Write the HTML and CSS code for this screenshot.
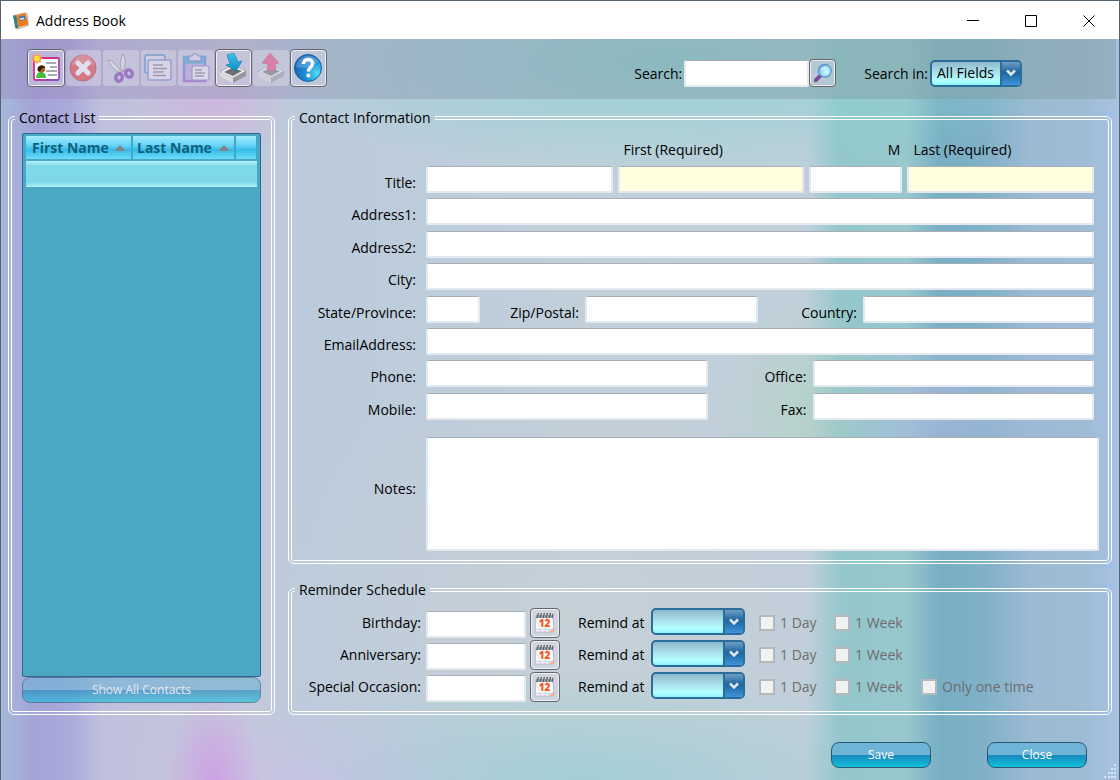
FILE: index.html
```html
<!DOCTYPE html>
<html lang="en">
<head>
    <meta charset="UTF-8">
    <meta name="viewport" content="width=device-width, initial-scale=1.0">
    <title>Address Book</title>
    <link rel="stylesheet" href="styles.css">
</head>
<body>
    <div class="window">
        <header class="title-bar">
            <svg class="app-icon" viewBox="0 0 20 20" aria-hidden="true">
                <path d="M2 4 14 1l3 1 1 13-12 4-2-1z" fill="#e9e4d8" stroke="#8a6a48" stroke-width="0.600"/>
                <path d="M5 4 15 1l3 13-11 3z" fill="#ee7a1c"/>
                <path d="M1 4l4 0 2 14-3 0z" fill="#34808e"/>
                <path d="M8 5l6-1 1 4-6 2z" fill="#3a78b8"/>
                <path d="M9 7l4-1 1 2-5 1z" fill="#cfe4f4"/>
            </svg>
            <h1>Address Book</h1>
            <div class="window-controls">
                <button type="button" aria-label="Minimize"><svg viewBox="0 0 12 12"><path d="M0 5.500h12"/></svg></button>
                <button type="button" aria-label="Maximize"><svg viewBox="0 0 12 12"><path d="M0.500 0.500h11v11h-11z"/></svg></button>
                <button type="button" aria-label="Close window"><svg viewBox="0 0 12 12"><path d="M0.500 0.500l11 11M11.500 0.500l-11 11"/></svg></button>
            </div>
        </header>

        <div class="content">
            <!-- Toolbar -->
            <div class="toolbar">
                <div class="tools">
                    <button type="button" class="tool" aria-label="New contact">
                        <svg viewBox="0 0 30 30">
                            <defs>
                                <linearGradient id="cardFrame" x1="0" y1="0" x2="1" y2="1">
                                    <stop offset="0" stop-color="#f0206a"/>
                                    <stop offset="1" stop-color="#8a52c4"/>
                                </linearGradient>
                            </defs>
                            <rect x="3" y="5" width="25" height="22" rx="1.500" fill="#fff" stroke="url(#cardFrame)" stroke-width="1.800"/>
                            <path d="M15 10h10M19 14h7M15 18h11M17 22h9" stroke="#8c8e96" stroke-width="1.600"/>
                            <path d="M5 25c0-5 3-6 5-6s5 1 5 6z" fill="#3fbf3c"/>
                            <circle cx="10.500" cy="16" r="3.600" fill="#a8641c"/>
                            <path d="M6.500 16c0-4 7-5 8-1-3-1-4 0-5 3-2 1-3 0-3-2z" fill="#2c1a0c"/>
                            <path d="M6 0l1.500 2.500L10 1.500 9.500 4l2.500 1.500L9.500 7l.5 2.500-2.500-.5L6 11 4.500 9 2 9.500 2.500 7 0 5.500 2.500 4 2 1.500l2.500 1z" fill="#ff8a50"/>
                            <circle cx="6" cy="5.500" r="3" fill="#ffe23c"/>
                        </svg>
                    </button>
                    <button type="button" class="tool" aria-label="Delete" disabled>
                        <svg viewBox="0 0 30 30">
                            <circle cx="15" cy="15" r="13" fill="#e8362e" stroke="#b82a28"/>
                            <path d="M4 13a11 11 0 0 1 22 0c-7-4-15-4-22 0z" fill="#f58a80" opacity="0.600"/>
                            <path d="M10 10l10 10M20 10l-10 10" stroke="#fff" stroke-width="5.200" stroke-linecap="round"/>
                        </svg>
                    </button>
                    <button type="button" class="tool" aria-label="Cut" disabled>
                        <svg viewBox="0 0 30 30">
                            <path d="M2 7c4 0 9 5 14 13-6-2-12-6-14-13zM17 1c3 4 3 10 0 18-4-6-3-13 0-18z" fill="#e6e6ee" stroke="#77777f" stroke-width="0.900"/>
                            <ellipse cx="13" cy="24.500" rx="3.200" ry="3.800" fill="none" stroke="#7530a8" stroke-width="3.400" transform="rotate(20 13 24.500)"/>
                            <ellipse cx="23" cy="20.500" rx="3.200" ry="3.800" fill="none" stroke="#7530a8" stroke-width="3.400" transform="rotate(-30 23 20.500)"/>
                        </svg>
                    </button>
                    <button type="button" class="tool" aria-label="Copy" disabled>
                        <svg viewBox="0 0 30 30">
                            <rect x="2" y="2" width="20" height="18" rx="2" fill="#f0f0fa" fill-opacity="0.400" stroke="#2c7cc4" stroke-width="1.500"/>
                            <rect x="5" y="7" width="23" height="20" rx="2" fill="#ece6f6" stroke="#6480c8" stroke-width="1.500"/>
                            <path d="M10 12h10M10 15.500h14M10 19h11M10 22.500h13" stroke="#74747e" stroke-width="1.300"/>
                        </svg>
                    </button>
                    <button type="button" class="tool" aria-label="Paste" disabled>
                        <svg viewBox="0 0 30 30">
                            <defs>
                                <linearGradient id="clipBlue" x1="0" y1="0" x2="0" y2="1">
                                    <stop offset="0" stop-color="#2f8ed0"/>
                                    <stop offset="1" stop-color="#8a4fc0"/>
                                </linearGradient>
                            </defs>
                            <path d="M3 4h21v24H3z" fill="#b49edc" stroke="url(#clipBlue)" stroke-width="2.400"/>
                            <path d="M4 5h19v6H4z" fill="#4c9ad8"/>
                            <path d="M8 8V3h3l1-2h4l1 2h3v5z" fill="#cfd8f0" stroke="#4868a8"/>
                            <rect x="11" y="13" width="17" height="14" rx="1.500" fill="#f0ecfa" stroke="#6a78c4" stroke-width="1.200"/>
                            <path d="M14 17h7M14 20h10M14 23h9" stroke="#74747e" stroke-width="1.300"/>
                        </svg>
                    </button>
                    <button type="button" class="tool" aria-label="Import">
                        <svg viewBox="0 0 30 30">
                            <defs>
                                <linearGradient id="blueArrow" x1="0" y1="0" x2="0" y2="1">
                                    <stop offset="0" stop-color="#3cc4ec"/>
                                    <stop offset="1" stop-color="#0d8fc4"/>
                                </linearGradient>
                                <symbol id="tray" viewBox="0 0 30 30">
                                    <path d="M2 19 14 12l14 6-13 7z" fill="#f4f4f5" stroke="#8c8c90" stroke-width="0.600"/>
                                    <path d="M6 19 14 15l10 3-9 5z" fill="#6f6f73"/>
                                    <path d="M2 19l13 6v5L2 23.500z" fill="#dcdcde"/>
                                    <path d="M28 18l-13 7v5l13-7z" fill="#97979b"/>
                                </symbol>
                            </defs>
                            <use href="#tray"/>
                            <path d="M9 2l7-2 4 9 4-1-6 10-10-6 4-1z" fill="url(#blueArrow)" stroke="#0d7cab" stroke-width="0.600"/>
                        </svg>
                    </button>
                    <button type="button" class="tool" aria-label="Export" disabled>
                        <svg viewBox="0 0 30 30">
                            <use href="#tray"/>
                            <path d="M14 0l9 10-4 1 1 5c-3 3-7 2-9 0l1-5-6-1z" fill="#ee3c7c" stroke="#c42a64" stroke-width="0.600"/>
                        </svg>
                    </button>
                    <button type="button" class="tool" aria-label="Help">
                        <svg viewBox="0 0 30 30">
                            <defs>
                                <radialGradient id="helpBall" cx="0.85" cy="0.7" r="0.9">
                                    <stop offset="0" stop-color="#52dcf4"/>
                                    <stop offset="0.5" stop-color="#1f8ed6"/>
                                    <stop offset="1" stop-color="#1560ae"/>
                                </radialGradient>
                            </defs>
                            <circle cx="15" cy="15" r="13.500" fill="url(#helpBall)" stroke="#1462a8"/>
                            <path d="M3 14a12 12 0 0 1 22-6c-4 6-14 8-22 6z" fill="#fff" opacity="0.220"/>
                            <path d="M10.500 11c0-6 9-6 9-.5 0 4-4 3.500-4 8" fill="none" stroke="#fff" stroke-width="3.400"/>
                            <circle cx="15.300" cy="22.500" r="2" fill="#fff"/>
                        </svg>
                    </button>
                </div>
                <form class="search">
                    <label for="search">Search:</label>
                    <input type="text" id="search">
                    <button type="button" class="icon-button search-button" aria-label="Search">
                        <svg viewBox="0 0 24 24">
                            <defs>
                                <radialGradient id="lens" cx="0.6" cy="0.6" r="0.6">
                                    <stop offset="0" stop-color="#e4fbff"/>
                                    <stop offset="0.7" stop-color="#8ad8f8"/>
                                    <stop offset="1" stop-color="#5cb0ec"/>
                                </radialGradient>
                            </defs>
                            <path d="M10 14l-6 6" stroke="#7a4a9c" stroke-width="4" stroke-linecap="round"/>
                            <circle cx="14" cy="9.500" r="7" fill="url(#lens)" stroke="#5f93cc" stroke-width="1.400"/>
                            <path d="M9.500 9c1-4 6-5 8-2-3 0-5 1-8 2z" fill="#fff" opacity="0.600"/>
                        </svg>
                    </button>
                    <label for="searchIn" class="search-in">Search in:</label>
                    <span class="combo">
                        <select id="searchIn">
                            <option>All Fields</option>
                        </select>
                        <span class="combo-arrow">
                            <svg viewBox="0 0 10 8">
                                <defs>
                                    <path id="chevron" d="M1 1.500 5 5.500 9 1.500" fill="none" stroke="#dfe6ea" stroke-width="2.600"/>
                                </defs>
                                <use href="#chevron"/>
                            </svg>
                        </span>
                    </span>
                </form>
            </div>

            <div class="panels">
                <!-- Contact list -->
                <fieldset class="contact-list">
                    <legend>Contact List</legend>
                    <div class="list-body">
                        <div class="list-box">
                            <table>
                                <thead>
                                    <tr>
                                        <th scope="col" class="first-col">First Name <span class="sort"></span></th>
                                        <th scope="col" class="last-col">Last Name <span class="sort"></span></th>
                                        <td></td>
                                    </tr>
                                </thead>
                                <tbody>
                                    <tr>
                                        <td colspan="3"></td>
                                    </tr>
                                </tbody>
                            </table>
                        </div>
                        <button type="button" class="action" disabled>Show All Contacts</button>
                    </div>
                </fieldset>

                <div class="details">
                    <!-- Contact information -->
                    <fieldset class="contact-info">
                        <legend>Contact Information</legend>
                        <div class="info-body">
                            <div class="name-cols name-heads">
                                <span></span>
                                <label for="first">First (Required)</label>
                                <label for="middle" class="middle">M</label>
                                <label for="last">Last (Required)</label>
                            </div>
                            <div class="rows">
                                <div class="row">
                                    <label for="title">Title:</label>
                                    <div class="name-cols">
                                        <input type="text" id="title">
                                        <input type="text" id="first" class="required">
                                        <input type="text" id="middle">
                                        <input type="text" id="last" class="required">
                                    </div>
                                </div>
                                <div class="row">
                                    <label for="address1">Address1:</label>
                                    <input type="text" id="address1">
                                </div>
                                <div class="row">
                                    <label for="address2">Address2:</label>
                                    <input type="text" id="address2">
                                </div>
                                <div class="row">
                                    <label for="city">City:</label>
                                    <input type="text" id="city">
                                </div>
                                <div class="row">
                                    <label for="state">State/Province:</label>
                                    <div class="state-cols">
                                        <input type="text" id="state">
                                        <label for="zip">Zip/Postal:</label>
                                        <input type="text" id="zip">
                                        <label for="country">Country:</label>
                                        <input type="text" id="country">
                                    </div>
                                </div>
                                <div class="row">
                                    <label for="email">EmailAddress:</label>
                                    <input type="text" id="email">
                                </div>
                                <div class="row">
                                    <label for="phone">Phone:</label>
                                    <div class="phone-cols">
                                        <input type="text" id="phone">
                                        <label for="office">Office:</label>
                                        <input type="text" id="office">
                                    </div>
                                </div>
                                <div class="row">
                                    <label for="mobile">Mobile:</label>
                                    <div class="phone-cols">
                                        <input type="text" id="mobile">
                                        <label for="fax">Fax:</label>
                                        <input type="text" id="fax">
                                    </div>
                                </div>
                            </div>
                            <div class="row notes-row">
                                <label for="notes">Notes:</label>
                                <textarea id="notes"></textarea>
                            </div>
                        </div>
                    </fieldset>

                    <!-- Reminder schedule -->
                    <fieldset class="reminders">
                        <legend>Reminder Schedule</legend>
                        <div class="reminder-body">
                            <div class="reminder">
                                <label for="birthday" class="date-label">Birthday:</label>
                                <input type="text" id="birthday">
                                <button type="button" class="icon-button" aria-label="Pick birthday">
                                    <svg viewBox="0 0 22 22">
                                        <defs>
                                            <g id="calendar">
                                                <path d="M2 4h17l1 14-1 2H1z" fill="#f8f8fc" stroke="#a9abc8" stroke-width="0.800"/>
                                                <path d="M2 3h17v3H2z" fill="#a3a5ad"/>
                                                <path d="M3 6 4.500 1M6 6l1.500-5M9 6l1.500-5M12 6l1.500-5M15 6l1.500-5M18 6l1-4" stroke="#5c5e66" stroke-width="1.200"/>
                                                <path d="M2 17.500h17M6 16v4M11 16v4M15 16v4" stroke="#c9cbe6" stroke-width="0.800"/>
                                                <path d="M19.500 15.500v4.500h-4z" fill="#f3b27c"/>
                                            </g>
                                        </defs>
                                        <use href="#calendar"/>
                                        <text x="10.500" y="15" text-anchor="middle" class="calendar-day">12</text>
                                    </svg>
                                </button>
                                <label for="birthdayAt" class="remind-label">Remind at</label>
                                <span class="combo">
                                    <select id="birthdayAt"><option></option></select>
                                    <span class="combo-arrow"><svg viewBox="0 0 10 8"><use href="#chevron"/></svg></span>
                                </span>
                                <label class="check day"><input type="checkbox" disabled>1 Day</label>
                                <label class="check week"><input type="checkbox" disabled>1 Week</label>
                            </div>
                            <div class="reminder">
                                <label for="anniversary" class="date-label">Anniversary:</label>
                                <input type="text" id="anniversary">
                                <button type="button" class="icon-button" aria-label="Pick anniversary">
                                    <svg viewBox="0 0 22 22">
                                        <use href="#calendar"/>
                                        <text x="10.500" y="15" text-anchor="middle" class="calendar-day">12</text>
                                    </svg>
                                </button>
                                <label for="anniversaryAt" class="remind-label">Remind at</label>
                                <span class="combo">
                                    <select id="anniversaryAt"><option></option></select>
                                    <span class="combo-arrow"><svg viewBox="0 0 10 8"><use href="#chevron"/></svg></span>
                                </span>
                                <label class="check day"><input type="checkbox" disabled>1 Day</label>
                                <label class="check week"><input type="checkbox" disabled>1 Week</label>
                            </div>
                            <div class="reminder">
                                <label for="occasion" class="date-label">Special Occasion:</label>
                                <input type="text" id="occasion">
                                <button type="button" class="icon-button" aria-label="Pick special occasion">
                                    <svg viewBox="0 0 22 22">
                                        <use href="#calendar"/>
                                        <text x="10.500" y="15" text-anchor="middle" class="calendar-day">12</text>
                                    </svg>
                                </button>
                                <label for="occasionAt" class="remind-label">Remind at</label>
                                <span class="combo">
                                    <select id="occasionAt"><option></option></select>
                                    <span class="combo-arrow"><svg viewBox="0 0 10 8"><use href="#chevron"/></svg></span>
                                </span>
                                <label class="check day"><input type="checkbox" disabled>1 Day</label>
                                <label class="check week"><input type="checkbox" disabled>1 Week</label>
                                <label class="check"><input type="checkbox" disabled>Only one time</label>
                            </div>
                        </div>
                    </fieldset>
                </div>
            </div>

            <div class="actions">
                <button type="button" class="action">Save</button>
                <button type="button" class="action">Close</button>
            </div>
            <svg class="grip" viewBox="0 0 14 14" aria-hidden="true">
                <path d="M12 0h2v2h-2zM9 4h2v2H9zM12 4h2v2h-2zM6 8h2v2H6zM9 8h2v2H9zM12 8h2v2h-2zM2 12h2v2H2zM6 12h2v2H6zM9 12h2v2H9zM12 12h2v2h-2z"/>
            </svg>
        </div>
    </div>
</body>
</html>
```

FILE: styles.css
```css
/* Global styles */
* {
    margin: 0;
    padding: 0;
    box-sizing: border-box;
}

body {
    background: #a9b8c4;
    color: #000;
    font-family: "Open Sans", "Noto Sans", sans-serif;
    font-size: 14px;
    line-height: 20px;
}

input, button, select, textarea {
    font: inherit;
    color: inherit;
}

.window {
    display: flex;
    flex-direction: column;
    min-height: 100vh;
    padding-top: 1px;
    border: 1px solid #56646f;
    border-bottom: none;
    background: #fff;
}

/* Title bar */
.title-bar {
    display: flex;
    align-items: center;
    height: 37px;
    padding: 0 1px 0 11px;
    background: #fff;
}

.app-icon {
    width: 18px;
    height: 20px;
    margin-right: 6px;
}

h1 {
    font-size: 14px;
    font-weight: 400;
}

.window-controls {
    display: flex;
    margin-left: auto;
}

.window-controls button {
    display: flex;
    align-items: center;
    justify-content: center;
    width: 58px;
    height: 37px;
    border: none;
    background: none;
}

.window-controls svg {
    width: 12px;
    height: 12px;
    fill: none;
    stroke: #000;
}

/* Watercolour backdrop */
.content {
    position: relative;
    flex: 1;
    display: flex;
    flex-direction: column;
    background:
        radial-gradient(ellipse 48px 90px at 19% 100%, rgba(206, 150, 230, 0.75), transparent),
        radial-gradient(ellipse 80px 60px at 19% 9%, rgba(214, 165, 226, 0.5), transparent),
        radial-gradient(ellipse 320px 110px at 52% 100%, rgba(150, 206, 212, 0.7), transparent),
        radial-gradient(ellipse 420px 120px at 60% 3%, rgba(140, 210, 210, 0.9), transparent),
        radial-gradient(ellipse 90px 120px at 72% 50%, rgba(170, 212, 186, 0.5), transparent),
        radial-gradient(ellipse 130px 90px at 84% 50%, rgba(170, 184, 222, 0.8), transparent),
        radial-gradient(ellipse 200px 80px at 28% 100%, rgba(206, 192, 230, 0.7), transparent),
        radial-gradient(ellipse 300px 260px at 50% 78%, rgba(198, 208, 214, 0.8), transparent),
        linear-gradient(to right,
            #a5b8da 0%, #a5a4d8 3%, #a9a9da 6%, #bfc0dd 9%, #c5c8da 20%, #bccbdc 27%,
            #becddb 40%, #c2d0da 54%, #c1cfdb 72%, #93c7cc 75%, #97c8cd 81%,
            #78aec4 84%, #80b1c8 88%, #9bbad3 92%, #9fbcd6 97%, #a8c2e4 100%);
}

/* Toolbar */
.toolbar {
    display: flex;
    justify-content: space-between;
    align-items: center;
    height: 60px;
    margin-right: 3px;
    padding: 0 94px 0 26px;
    background: linear-gradient(to right, rgba(150, 128, 185, 0.35), rgba(130, 148, 168, 0.4) 50%, rgba(130, 155, 155, 0.45));
}

.tools {
    display: grid;
    grid-template-columns: repeat(8, 1fr);
    width: 300px;
    padding-bottom: 2px;
}

.tool, .icon-button {
    display: flex;
    align-items: center;
    justify-content: center;
    border: 1px solid #66666c;
    border-radius: 4px;
    background: rgba(225, 222, 236, 0.45);
    box-shadow: inset 0 0 0 1px #eeeef2;
}

.tool {
    height: 38px;
}

.tool svg {
    width: 30px;
    height: 30px;
}

.tool:disabled {
    border-color: transparent;
    background-clip: padding-box;
    box-shadow: none;
}

.tool:disabled svg {
    opacity: 0.5;
}

.icon-button {
    width: 30px;
    height: 30px;
}

.icon-button svg {
    width: 22px;
    height: 22px;
}

/* Fields */
input[type="text"], textarea {
    display: block;
    width: 100%;
    min-width: 0;
    height: 27px;
    padding: 0 4px;
    border: 2px solid #e3e9ee;
    border-top: 1px solid #a9adb5;
    border-radius: 2px;
    background: #fff;
}

input[type="text"].required {
    background: #ffffe0;
}

.search {
    display: flex;
    align-items: center;
    padding-top: 8px;
    white-space: nowrap;
}

.search input[type="text"] {
    width: 125px;
    margin-left: 2px;
}

.icon-button.search-button {
    width: 27px;
    height: 28px;
}

.search-in {
    margin: 0 2px 0 28px;
}

.search label {
    padding-top: 2px;
}

.combo {
    position: relative;
    display: flex;
    width: 92px;
    height: 27px;
    border: 2px solid #2a6c9a;
    border-radius: 5px;
    background: #2a6c9a;
}

.combo select {
    width: 100%;
    padding: 0 20px 0 5px;
    border: none;
    border-radius: 3px;
    appearance: none;
    background: linear-gradient(#8fb9cc, #a9e0ea 45%, #b4ffff 80%, #8ef4fa);
}

.combo-arrow {
    position: absolute;
    top: 0;
    right: 0;
    display: flex;
    align-items: center;
    justify-content: center;
    width: 20px;
    height: 100%;
    border-left: 2px solid #2a6c9a;
    border-radius: 0 3px 3px 0;
    background: linear-gradient(#6c9fc4, #1f669e 45%, #3c94da);
    pointer-events: none;
}

.combo-arrow svg {
    width: 10px;
    height: 8px;
}

/* Panels */
.panels {
    flex: 1;
    display: flex;
    gap: 13px;
    padding: 9px 7px 0 7px;
}

fieldset {
    display: flex;
    flex-direction: column;
    min-width: 0;
    padding: 0 4px 0 3px;
    border: 4px double #fff;
    border-radius: 6px;
}

legend {
    padding: 0 4px;
}

.contact-list {
    width: 267px;
}

.list-body {
    flex: 1;
    display: flex;
    flex-direction: column;
    padding: 5px 6px 8px 7px;
}

.list-box {
    flex: 1;
    padding: 2px 2px 0 3px;
    border: 1px solid #2a6898;
    border-radius: 2px;
    background: #4ca8c2;
}

table {
    width: 100%;
    border-collapse: collapse;
    table-layout: fixed;
}

thead th, thead td {
    height: 24px;
    border-right: 2px solid #3fa6cc;
    background: linear-gradient(#a4ecfc, #66d4f6 40%, #36bce8 60%, #6cdcfa);
    color: #10607c;
    text-align: left;
}

thead th {
    padding-left: 6px;
    white-space: nowrap;
}

.first-col {
    width: 106px;
}

.last-col {
    width: 103px;
}

thead .last-col {
    padding-left: 4px;
}

.sort {
    display: inline-block;
    margin-left: 2px;
    border: 6px solid transparent;
    border-top: none;
    border-bottom-color: #808488;
    vertical-align: 2px;
}

tbody td {
    height: 27px;
    border-top: 2px solid #4ca8c2;
    background: linear-gradient(#b4f2fa, #7ed8ea 20%, #7ed8ea 80%, #b0f0f8);
}

.details {
    flex: 1;
    display: flex;
    flex-direction: column;
    gap: 16px;
    min-width: 0;
}

.contact-info, .info-body, .rows {
    flex: 1;
}

.info-body {
    display: flex;
    flex-direction: column;
    padding: 12px 5px 9px 1px;
}

.name-cols {
    display: grid;
    grid-template-columns: 2fr 2fr 1fr 2fr;
    gap: 5px;
}

.name-heads {
    margin: 0 5px 6px 130px;
}

.name-heads label {
    padding-left: 6px;
}

.name-heads .middle {
    padding-right: 2px;
    text-align: right;
}

.rows {
    display: grid;
    grid-auto-rows: 1fr;
    padding-right: 5px;
}

.row {
    display: grid;
    grid-template-columns: 120px 1fr;
    gap: 10px;
}

.row label {
    padding-top: 7px;
    text-align: right;
    white-space: nowrap;
}

.state-cols, .phone-cols {
    display: grid;
}

.state-cols {
    grid-template-columns: 54fr 105px 173fr 105px 231fr;
}

.phone-cols {
    grid-template-columns: 1fr 105px 1fr;
}

.state-cols label, .phone-cols label {
    padding-right: 6px;
}

.notes-row {
    align-items: center;
    padding-top: 12px;
}

.row label[for="notes"] {
    padding: 0 0 10px;
}

textarea {
    height: 114px;
    resize: none;
}

/* Reminders */
.reminder-body {
    display: flex;
    flex-direction: column;
    gap: 2px;
    padding: 8px 0 9px 1px;
}

.reminder {
    display: flex;
    align-items: center;
    height: 30px;
}

.date-label {
    width: 125px;
    margin-right: 5px;
    text-align: right;
    white-space: nowrap;
}

.reminder input[type="text"] {
    align-self: flex-end;
    width: 100px;
    margin-right: 4px;
}

.calendar-day {
    font-size: 10px;
    font-weight: 800;
    fill: #f4581c;
}

.remind-label {
    width: 73px;
    margin-left: 18px;
}

.reminder .combo {
    width: 94px;
    align-self: flex-start;
}

.check {
    display: flex;
    align-items: center;
    color: #6d6d6d;
}

.check input {
    width: 16px;
    height: 16px;
    margin-right: 5px;
    border: 2px solid #b4b8bb;
    appearance: none;
    background: #f1f1f1;
}

.day {
    width: 75px;
    margin-left: 14px;
}

.week {
    width: 87px;
}

/* Bottom buttons */
.actions {
    display: flex;
    justify-content: flex-end;
    gap: 56px;
    padding: 27px 32px 12px;
}

.action {
    width: 100px;
    height: 26px;
    border: 1px solid #2d5574;
    border-radius: 8px;
    background: linear-gradient(#6db4d6 50%, #1a86bc 50%, #12c2de);
    color: #fff;
    font-size: 12px;
}

.action:disabled {
    width: 100%;
    opacity: 0.6;
}

.grip {
    position: absolute;
    right: 3px;
    bottom: 2px;
    width: 14px;
    height: 14px;
    fill: #d8e6f2;
}
```
